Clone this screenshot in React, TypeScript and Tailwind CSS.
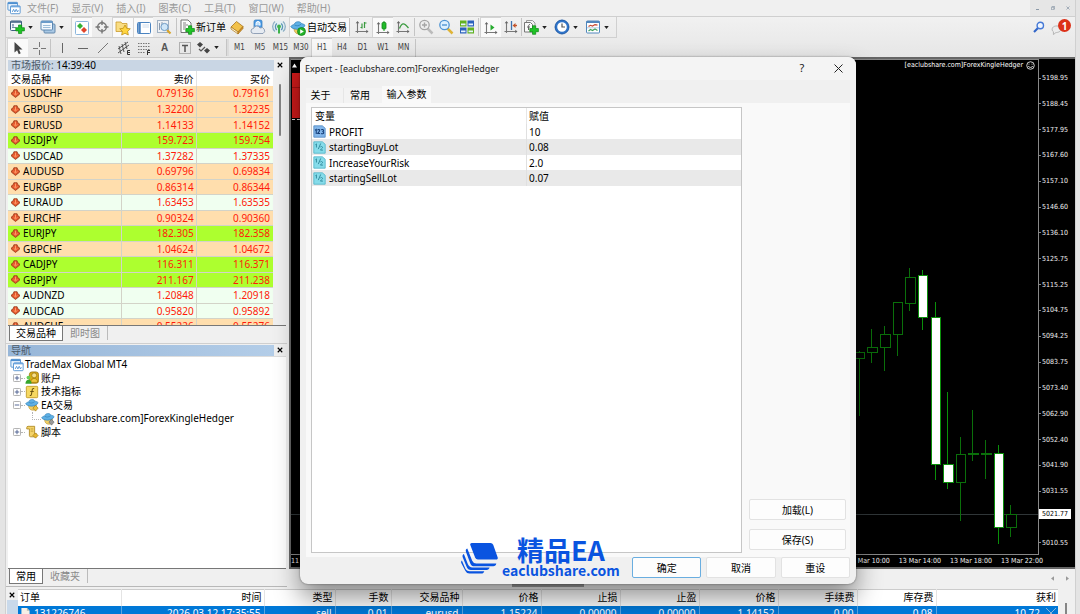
import type { ReactNode } from "react";

const CHART_FONT = "font-['DejaVu_Sans_Condensed','Noto_Sans',sans-serif]";

/* ---------- icons ---------- */

function Icon({ children, className = "size-4" }: { children: ReactNode; className?: string }) {
  return (
    <svg viewBox="0 0 16 16" fill="none" aria-hidden="true" className={`shrink-0 ${className}`}>
      {children}
    </svg>
  );
}

const Plus = ({ x = 0, y = 0 }: { x?: number; y?: number }) => (
  <path
    transform={`translate(${x} ${y})`}
    d="M3 .5h3.200v2.700h2.700v3.200H6.200V9H3V6.400H.3V3.200H3z"
    fill="#1fc426"
    stroke="#0b8a12"
    strokeWidth=".7"
  />
);

const AppLogo = ({ className }: { className?: string }) => (
  <Icon className={className}>
    <rect x="1" y="1.500" width="11" height="9" rx="1" fill="#e8f2fb" stroke="#4d8fd0" />
    <path d="M1 2.500h11" stroke="#4d8fd0" strokeWidth="2" />
    <rect x="4" y="5.500" width="11" height="9" rx="1" fill="#fff" stroke="#4d8fd0" />
    <path d="M4 6.500h11" stroke="#6aa5dd" strokeWidth="1.500" />
    <path d="M6 12.500l1.500-3 1.500 3 1.500-3 1.500 3 1-2" stroke="#4d8fd0" />
  </Icon>
);

const NewChart = () => (
  <Icon>
    <rect x="1.500" y="2" width="11" height="9.500" rx="1" fill="#f4f8fc" stroke="#3d5f80" />
    <path d="M1.500 3h11" stroke="#3d5f80" strokeWidth="1.500" />
    <path d="M4 5v4M3 6h2M3 8.500h4" stroke="#6e8aa6" />
    <Plus x={6.500} y={5.500} />
  </Icon>
);

const Profiles = () => (
  <Icon>
    <rect x="4" y="5" width="11" height="9" rx="1" fill="#a9c8e4" stroke="#6489ac" />
    <rect x="1" y="2" width="11.500" height="9" rx="1" fill="#f3f8fd" stroke="#5d87b0" />
    <path d="M1 3h11.500" stroke="#6b9bc9" strokeWidth="2" />
    <path d="M3 6.500h7.500M3 8.500h7.500" stroke="#9dbdd9" />
  </Icon>
);

const MarketWatchIcon = () => (
  <Icon>
    <rect x="1.500" y="1.500" width="13" height="13" rx="1" fill="#fff" stroke="#8ab6dd" />
    <path d="M6 3l3 3-3 3-3-3z" fill="#35b135" />
    <path d="M10 7l3 3-3 3-3-3z" fill="#e0452a" />
  </Icon>
);

const Crosshair = () => (
  <Icon>
    <circle cx="8" cy="8" r="4.300" stroke="#777" strokeWidth="1.400" />
    <path d="M8 1.500v4.500M8 10v4.500M1.500 8h4.500M10 8h4.500" stroke="#777" strokeWidth="1.400" />
  </Icon>
);

const FolderStar = () => (
  <Icon>
    <path d="M1 3.500V2h5l1 1.500h5v8H1z" fill="#f9dd83" stroke="#c99a2c" strokeWidth=".8" />
    <path d="M10 5l1.700 3.300 3.600.5-2.600 2.500.6 3.700-3.300-1.700L6.700 15l.6-3.700-2.600-2.500 3.600-.5z" fill="#ffd53f" stroke="#b8860b" strokeWidth=".7" />
  </Icon>
);

const TerminalIcon = () => (
  <Icon>
    <rect x="1.500" y="2.500" width="13" height="11" rx="1" fill="#fff" stroke="#4a83c0" />
    <path d="M3.500 2.500v11" stroke="#4a83c0" strokeWidth="2.500" />
    <path d="M6.500 5h6.500M6.500 7h6.500" stroke="#b8cce2" strokeWidth=".7" />
  </Icon>
);

const TesterIcon = () => (
  <Icon>
    <rect x="1.500" y="1.500" width="11" height="12" fill="#eef1f4" stroke="#9fb0c2" />
    <path d="M3.500 4v7M6 3v4" stroke="#8a9bb0" />
    <path d="M11 11l3.500 3.500" stroke="#d9a52c" strokeWidth="2.200" />
    <circle cx="8.500" cy="8" r="3.600" fill="#cfe6f8" stroke="#6f9cc6" />
  </Icon>
);

const NewOrderIcon = () => (
  <Icon>
    <path d="M2 1h7l3 3v9.500H2z" fill="#fdfdfd" stroke="#666" strokeWidth=".9" />
    <path d="M4 4h3M4 6h5M4 8h3M4 10h2" stroke="#777" strokeWidth=".9" />
    <Plus x={6.500} y={6.300} />
  </Icon>
);

const MetaEditor = () => (
  <Icon>
    <path d="M2 8L7.500 2.500 14 7.500 9 13z" fill="#f2c14a" stroke="#a8741a" strokeWidth=".8" />
    <path d="M2 8v2l7 5v-2z" fill="#fff3cf" stroke="#a8741a" strokeWidth=".7" />
    <path d="M9 13v2l5-5.500v-2z" fill="#d6932a" stroke="#a8741a" strokeWidth=".7" />
  </Icon>
);

const CloudUser = () => (
  <Icon>
    <rect x="4" y="1" width="8" height="8.500" rx="1.500" fill="#4b9be6" stroke="#2f75b8" strokeWidth=".7" />
    <path d="M6 6.500V4.500a2 2 0 014 0v2" fill="#bfe0fb" stroke="#fff" />
    <path d="M3.500 14.500a2.500 2.500 0 010-5 3.500 3.500 0 016.500-.5 2.800 2.800 0 013 5.500z" fill="#e6ebf2" stroke="#7c8fa9" strokeWidth=".8" />
  </Icon>
);

const Signal = () => (
  <Icon>
    <circle cx="8" cy="7.500" r="6.300" fill="#e4eef2" />
    <path d="M4 12.500a6.500 6.500 0 010-10M12 2.500a6.500 6.500 0 010 10" stroke="#8fb0c4" strokeWidth="1.300" />
    <path d="M5.800 11a4.500 4.500 0 010-6.500M10.200 4.500a4.500 4.500 0 010 6.500" stroke="#5b96b5" strokeWidth="1.300" />
    <circle cx="8" cy="7.500" r="1.900" fill="#3fb24a" />
    <path d="M8 8v6.500" stroke="#3fb24a" strokeWidth="2" />
  </Icon>
);

const Expert = ({ badge, className }: { badge: ReactNode; className?: string }) => (
  <Icon className={className}>
    <path d="M4 8c0 4 2 6 5 6s4-3 4-6z" fill="#f0cd63" stroke="#b18b2b" strokeWidth=".6" />
    <path d="M.8 6.500C2 4.500 4 5 4.500 4 5 1.500 9.500.8 11 3c.6 1 3 .8 4 2.300-1 3-5 4.200-8 4C4 9 1.500 8.300.8 6.500z" fill="#5fb0e4" stroke="#2d7db5" strokeWidth=".7" />
    <path d="M4.500 5c2 1.200 4.500 1 6.500-.8" stroke="#2d7db5" strokeWidth=".7" />
    {badge}
  </Icon>
);

const PlayBadge = () => (
  <>
    <circle cx="11.500" cy="11.500" r="4" fill="#24b42a" stroke="#0d7e14" strokeWidth=".7" />
    <path d="M10.200 9.300v4.400l3.600-2.200z" fill="#fff" />
  </>
);

const Axes = () => (
  <>
    <path d="M3.500 3v11M1.500 12.500h12" stroke="#777" strokeWidth="1.100" />
    <path d="M1.700 4.200L3.500 2l1.800 2.200zM12.300 10.700l2.200 1.800-2.200 1.800z" fill="#666" />
  </>
);

const BarChart = () => (
  <Icon>
    <Axes />
    <path d="M8 9.500V4.500M8 8.500H6.500M10.500 3v6M10.500 4h2" stroke="#3a9b3f" strokeWidth="1.200" />
  </Icon>
);
const CandleChart = () => (
  <Icon>
    <Axes />
    <path d="M9 1v10" stroke="#159b1c" />
    <rect x="7" y="2.500" width="4" height="6.500" rx="1" fill="#20bb29" stroke="#128419" strokeWidth=".8" />
  </Icon>
);
const LineChart = () => (
  <Icon>
    <Axes />
    <path d="M4.500 9.500C7 3.500 9 3.500 13.500 9" stroke="#3a9b3f" strokeWidth="1.300" />
  </Icon>
);

const Magnifier = ({ ring, glass, handle, plus }: { ring: string; glass: string; handle: string; plus?: boolean }) => (
  <Icon>
    <path d="M9.500 9.500l5 5" stroke={handle} strokeWidth="2.500" />
    <circle cx="6.500" cy="6" r="4.700" fill={glass} stroke={ring} strokeWidth="1.300" />
    <path d={plus ? "M4 6h5M6.500 3.500v5" : "M4 6h5"} stroke={ring} strokeWidth="1.400" />
  </Icon>
);

const TileWindows = () => (
  <Icon>
    <rect x="1" y="1.500" width="6.500" height="6" fill="#62b222" />
    <rect x="8.500" y="1.500" width="6.500" height="6" fill="#2c62bd" />
    <rect x="1" y="8.500" width="6.500" height="6" fill="#2c62bd" />
    <rect x="8.500" y="8.500" width="6.500" height="6" fill="#62b222" />
    <path d="M2 5.300h4.500M9.500 5.300H14M2 12.300h4.500M9.500 12.300H14" stroke="#e8f4ff" strokeWidth="1.800" />
  </Icon>
);

const AutoScroll = () => (
  <Icon>
    <Axes />
    <path d="M7.500 4.500v6l4-3z" fill="#27ab2e" />
  </Icon>
);
const ChartShift = () => (
  <Icon>
    <Axes />
    <path d="M8.500 2v9" stroke="#3e72ad" strokeWidth="1.300" />
    <path d="M14 6.500h-3" stroke="#c3542b" strokeWidth="1.400" />
    <path d="M9.500 6.500l3-2.500v5z" fill="#c3542b" />
  </Icon>
);
const Indicators = () => (
  <Icon>
    <path d="M3.500 1.500h6l2.500 2.500v8H3.500z" fill="#f2f2f2" stroke="#999" />
    <path d="M1.500 3.500h6l2 2v7.500h-8z" fill="#fafafa" stroke="#777" />
    <path d="M7 5.500c-1.500 0-1.500 1-1.500 2V11M4 8h3" stroke="#666" />
    <Plus x={6.500} y={6.300} />
  </Icon>
);
const Clock = () => (
  <Icon>
    <circle cx="8" cy="8" r="6" fill="#fff" stroke="#2f74c9" strokeWidth="2.400" />
    <circle cx="8" cy="8" r="7" stroke="#1d519a" strokeWidth=".7" />
    <path d="M8 4.500V8h3" stroke="#555" strokeWidth="1.200" />
  </Icon>
);
const Templates = () => (
  <Icon>
    <rect x="1.500" y="2" width="13" height="12" rx="1" fill="#fff" stroke="#5187bd" />
    <path d="M1.500 3h13" stroke="#5187bd" strokeWidth="2" />
    <path d="M3.500 7.500l2-1.200 2 .8 2.500-1.500 2.500.5" stroke="#c4462f" strokeWidth="1.200" />
    <path d="M2 8.800h12" stroke="#9bb9d6" strokeWidth=".7" />
    <path d="M3.500 12l2-1.500 2 1 2.500-1.500 2.500 1.500" stroke="#3fa15c" strokeWidth="1.200" />
  </Icon>
);

const Cursor = () => (
  <Icon>
    <path d="M4.500 2v10.500l2.600-2.300 1.700 4 1.900-.9-1.700-3.800h3.500z" fill="#444" />
  </Icon>
);
const CrossCursor = () => (
  <Icon>
    <path d="M8.500 2v5M8.500 10v5M2 8.500h5M10 8.500h5" stroke="#777" />
  </Icon>
);
const VLine = () => (
  <Icon>
    <path d="M8.500 3v10" stroke="#666" />
  </Icon>
);
const HLine = () => (
  <Icon>
    <path d="M3 8.500h10" stroke="#666" />
  </Icon>
);
const TrendLine = () => (
  <Icon>
    <path d="M3 13L13 3" stroke="#777" />
  </Icon>
);
const Channel = () => (
  <Icon>
    <path d="M2 9l10-7M2 13l11-8M3 6l2 8M6 4l2 8M9 2l2 7" stroke="#555" />
    <path d="M14 10.500h-2.500v4H14M11.500 12.500H14" stroke="#333" />
  </Icon>
);
const Fibo = () => (
  <Icon>
    <path d="M2 3.500h12M2 6.500h12M2 9.500h12M2 12.500h7" stroke="#777" strokeDasharray="1.500 1" />
    <path d="M11.500 15v-4.500H14M11.500 12.500H14" stroke="#333" />
  </Icon>
);
const Letter = () => (
  <span className="font-['Liberation_Sans',sans-serif] text-[10px] font-bold leading-4 text-[#555]">A</span>
);
const TextLabel = () => (
  <Icon>
    <rect x="2.500" y="2.500" width="11" height="11" stroke="#777" strokeDasharray="1 1" />
    <path d="M5 5.500h6M8 5.500V12" stroke="#555" strokeWidth="1.500" />
  </Icon>
);
const Arrows = () => (
  <Icon>
    <path d="M2 4.500L5 2l3 2.500L5 7.500z" fill="#444" />
    <path d="M4 9l2 2 4-4" stroke="#555" strokeWidth="1.200" />
    <path d="M9 10.500L12 8l3 2.500-3 3z" fill="#444" />
  </Icon>
);

const DownArrow = () => (
  <svg viewBox="0 0 10 10" aria-hidden="true" className="size-[9px] shrink-0">
    <path d="M3.200.8h3.600l.8 2.300 1.900 1.200v1.500L5 9.400.5 5.800V4.300l1.900-1.200z" fill="#e2552b" stroke="#8f3413" strokeWidth=".8" />
    <path d="M5 1.800v4.500M3 4.800l2 2 2-2" stroke="#ff9a66" strokeWidth="1.100" fill="none" />
  </svg>
);

const Accounts = () => (
  <Icon className="size-[14px]">
    <rect x="5" y="1" width="10.500" height="13" rx="3" fill="#d9a915" stroke="#8f6c06" strokeWidth=".8" />
    <circle cx="10.500" cy="5" r="2.800" fill="#f6df8c" stroke="#8f6c06" strokeWidth=".7" />
    <path d="M6.500 13c0-6 8-6 8 0z" fill="#f0c63c" stroke="#8f6c06" strokeWidth=".7" />
    <circle cx="4" cy="7.500" r="2.200" fill="#67cf55" />
    <path d="M.5 14.500c0-6 7-6 7 0z" fill="#35a52c" />
  </Icon>
);
const FunctionIcon = () => (
  <Icon className="size-[14px]">
    <rect x="1.500" y="1.500" width="13" height="13" rx="1" fill="#f6d861" stroke="#c19a24" />
    <path d="M10.500 4c-2-.5-2.200 1-2.500 3l-.5 3c-.3 1.700-.8 2.300-2 2M6 7.500h4" stroke="#6b5310" strokeWidth="1.200" />
  </Icon>
);
const ScriptIcon = () => (
  <Icon className="size-[14px]">
    <path d="M2 3a1.500 1.500 0 011.500-1.500H11V10h2v3.500H6.500A1.500 1.500 0 015 12V4.500H2z" fill="#f3d36a" stroke="#b08a25" />
    <path d="M6.500 4.500h3M6.500 7h3" stroke="#b08a25" strokeWidth=".8" />
    <path d="M12 9l3 3-3 3-3-3z" fill="#e8b830" stroke="#9a7414" strokeWidth=".7" />
  </Icon>
);

const IntParam = () => (
  <Icon className="size-[13px]">
    <path d="M1 1h10.500L15 4v11H1z" fill="#82b6ea" stroke="#5189c2" />
    <path d="M2.500 6.500L4 5.500V11M5.500 6.500c1-1.500 3-.8 2.700.5C8 8.200 6 9.500 5.700 10.500h3M10 6c1-1 3-.6 3 .8 0 .9-.8 1.200-1.500 1.200 1 0 1.700.5 1.700 1.400 0 1.500-2.200 1.700-3.200.8" stroke="#153f78" strokeWidth="1.300" />
  </Icon>
);
const DoubleParam = () => (
  <Icon className="size-[13px]">
    <path d="M1 1h10.500L15 4v11H1z" fill="#86dcea" stroke="#50b4c8" />
    <path d="M3 4.500l1.200-1V8M9.500 3L6.500 10M9 7.500c1-1.300 3-.7 2.700.6C11.500 9 9.500 10 9.200 11.200h3" stroke="#2b8498" strokeWidth="1.100" />
  </Icon>
);

const CloseGlyph = ({ className = "size-[6px]" }: { className?: string }) => (
  <svg viewBox="0 0 8 8" aria-hidden="true" className={className}>
    <path d="M1 1l6 6M7 1L1 7" stroke="currentColor" strokeWidth="1.500" />
  </svg>
);

const Caret = () => (
  <svg viewBox="0 0 6 4" aria-hidden="true" className="h-[3px] w-[5px] shrink-0">
    <path d="M0 0h6L3 4z" fill="#222" />
  </svg>
);

/* ---------- toolbars ---------- */

function Tool({
  label,
  children,
  narrow,
  active,
}: {
  label: string;
  children: ReactNode;
  narrow?: boolean;
  active?: boolean;
}) {
  return (
    <button
      type="button"
      aria-label={label}
      className={`flex h-full shrink-0 items-center justify-center ${narrow ? "w-5" : "w-[21px]"} ${
        active ? "border-l border-t border-[#d4d4d4] bg-[#fafafa]" : ""
      }`}
    >
      {children}
    </button>
  );
}

const DropTool = ({ label, children }: { label: string; children: ReactNode }) => (
  <button type="button" aria-label={label} className="flex h-full w-[31px] shrink-0 items-center gap-[3px]">
    {children}
    <Caret />
  </button>
);

const Sep = ({ className = "mx-px" }: { className?: string }) => (
  <span className={`h-[18px] w-px shrink-0 bg-[#c4c4c4] ${className}`} />
);

const menus = ["文件(F)", "显示(V)", "插入(I)", "图表(C)", "工具(T)", "窗口(W)", "帮助(H)"];
const frames = ["M1", "M5", "M15", "M30", "H1", "H4", "D1", "W1", "MN"];

function MenuBar() {
  return (
    <header className="flex h-[17px] shrink-0 items-center border-b border-[#cfcfcf] pl-px">
      <AppLogo className="size-[14px]" />
      <nav className="flex gap-[13px] pl-[6px] text-[10px] leading-4 text-[#999]">
        {menus.map((m) => (
          <button type="button" key={m}>
            {m}
          </button>
        ))}
      </nav>
      <div className="ml-auto flex h-full items-center bg-[#e6e6e6] text-[#8c9aa8]">
        <button type="button" aria-label="最小化" className="flex w-[15px] justify-center">
          <span className="mt-0.5 h-px w-[3px] bg-[#8c9aa8]" />
        </button>
        <button type="button" aria-label="还原" className="flex w-[15px] justify-center">
          <svg viewBox="0 0 8 8" aria-hidden="true" className="size-1">
            <path d="M2.500 2V.8h5v5H6M.8 2.500h5v5h-5z" fill="none" stroke="currentColor" strokeWidth="1.500" />
          </svg>
        </button>
        <button type="button" aria-label="关闭" className="flex w-[15px] justify-center">
          <CloseGlyph className="size-1" />
        </button>
      </div>
    </header>
  );
}

function Toolbars() {
  return (
    <div className="flex h-10 shrink-0 justify-between bg-linear-to-b from-[#f1f1f1] to-[#e6e6e6]">
      <div>
        <div className="flex h-[21px] items-center border-b border-r border-[#d0d0d0] pl-[3px]">
          <DropTool label="新图表"><NewChart /></DropTool>
          <DropTool label="配置文件"><Profiles /></DropTool>
          <Tool label="市场报价" active><MarketWatchIcon /></Tool>
          <Tool label="数据窗口" narrow><Crosshair /></Tool>
          <Tool label="导航" active><FolderStar /></Tool>
          <Tool label="终端" narrow active><TerminalIcon /></Tool>
          <Tool label="策略测试"><TesterIcon /></Tool>
          <Sep className="mx-0.5" />
          <button type="button" className="flex h-full w-[48px] shrink-0 items-center gap-px whitespace-nowrap text-[10px] text-black">
            <NewOrderIcon />
            新订单
          </button>
          <Tool label="编辑器" narrow><MetaEditor /></Tool>
          <Tool label="社区"><CloudUser /></Tool>
          <Tool label="信号"><Signal /></Tool>
          <button type="button" className="flex h-full w-[60px] shrink-0 items-center gap-px whitespace-nowrap border-l border-t border-[#d4d4d4] bg-[#fafafa] text-[10px] text-black">
            <Expert badge={<PlayBadge />} />
            自动交易
          </button>
          <Sep className="mr-0.5" />
          <Tool label="柱状图" narrow><BarChart /></Tool>
          <Tool label="蜡烛图" active><CandleChart /></Tool>
          <Tool label="折线图" narrow><LineChart /></Tool>
          <Sep />
          <Tool label="放大" narrow><Magnifier ring="#a5a5a5" glass="#eee" handle="#bbb" plus /></Tool>
          <Tool label="缩小" narrow><Magnifier ring="#4f94d3" glass="#dcf0ff" handle="#dfb437" /></Tool>
          <Tool label="平铺"><TileWindows /></Tool>
          <Sep />
          <Tool label="自动滚动" active><AutoScroll /></Tool>
          <Tool label="图表平移" narrow><ChartShift /></Tool>
          <Sep className="mr-px" />
          <DropTool label="指标"><Indicators /></DropTool>
          <DropTool label="周期"><Clock /></DropTool>
          <DropTool label="模板"><Templates /></DropTool>
        </div>
        <div className="flex h-[19px] items-center pl-px">
          <Tool label="光标" active><Cursor /></Tool>
          <Tool label="十字线"><CrossCursor /></Tool>
          <Sep />
          <Tool label="垂直线" narrow><VLine /></Tool>
          <Tool label="水平线"><HLine /></Tool>
          <Tool label="趋势线" narrow><TrendLine /></Tool>
          <Tool label="等距通道"><Channel /></Tool>
          <Tool label="斐波那契" narrow><Fibo /></Tool>
          <Tool label="文本"><Letter /></Tool>
          <Tool label="文本标签" narrow><TextLabel /></Tool>
          <DropTool label="箭头"><Arrows /></DropTool>
          <span className="h-[17px] w-[3px] shrink-0 border-l border-[#c4c4c4] bg-[#dcdcdc]" />
          {frames.map((f, i) => (
            <button
              type="button"
              key={f}
              className={`h-full shrink-0 text-center font-['DejaVu_Sans_Condensed',sans-serif] text-[8px] text-[#444] ${
                i % 2 ? "w-5" : "w-[21px]"
              } ${f === "H1" ? "border-l border-t border-[#d0d0d0] bg-[#f7f7f7]" : ""}`}
            >
              {f}
            </button>
          ))}
          <Sep />
        </div>
      </div>
      <div className="flex h-5 items-center gap-1 pr-1">
        <button type="button" aria-label="搜索">
          <svg viewBox="0 0 12 12" fill="none" aria-hidden="true" className="size-3">
            <path d="M1 11l4-4" stroke="#3165c8" strokeWidth="2.200" />
            <circle cx="7.300" cy="4.500" r="3.200" fill="#eef5ff" stroke="#4679d6" strokeWidth="1.400" />
          </svg>
        </button>
        <button type="button" aria-label="通知" className="relative h-4 w-[22px]">
          <svg viewBox="0 0 16 16" aria-hidden="true" className="absolute bottom-0 left-0.5 size-[13px]">
            <path d="M2 7c2-3 9-3 10 1s-4 5-6 5l-3 2.500V12C1 11 1 8.500 2 7z" fill="#ececec" stroke="#aaa" />
          </svg>
          <span className="absolute right-0 top-0 flex size-[13px] items-center justify-center rounded-full bg-[#dc3018] text-[10px] font-bold leading-none text-white">
            1
          </span>
        </button>
      </div>
    </div>
  );
}

/* ---------- left side ---------- */

const quotes: [string, string, string, "o" | "g" | "m"][] = [
  ["USDCHF", "0.79136", "0.79161", "o"],
  ["GBPUSD", "1.32200", "1.32235", "o"],
  ["EURUSD", "1.14133", "1.14152", "o"],
  ["USDJPY", "159.723", "159.754", "g"],
  ["USDCAD", "1.37282", "1.37335", "m"],
  ["AUDUSD", "0.69796", "0.69834", "o"],
  ["EURGBP", "0.86314", "0.86344", "o"],
  ["EURAUD", "1.63453", "1.63535", "m"],
  ["EURCHF", "0.90324", "0.90360", "o"],
  ["EURJPY", "182.305", "182.358", "g"],
  ["GBPCHF", "1.04624", "1.04672", "o"],
  ["CADJPY", "116.311", "116.371", "g"],
  ["GBPJPY", "211.167", "211.238", "g"],
  ["AUDNZD", "1.20848", "1.20918", "m"],
  ["AUDCAD", "0.95820", "0.95892", "m"],
  ["AUDCHF", "0.55226", "0.55276", "o"],
];
const rowColor = { o: "bg-[#ffdead]", g: "bg-[#adff2f]", m: "bg-[#f0fff0]" };

function PanelTitle({ children, tone }: { children: ReactNode; tone: string }) {
  return (
    <div className="flex h-3 shrink-0 items-center">
      <h2 className={`h-[11px] flex-1 overflow-hidden pl-[3px] text-[10px] leading-[10px] text-[#4c5a68] ${tone}`}>{children}</h2>
      <button type="button" aria-label="关闭" className="flex w-3 justify-center text-black">
        <CloseGlyph />
      </button>
    </div>
  );
}

function PanelTabs({ tabs }: { tabs: [string, string] }) {
  return (
    <div role="tablist" className="flex h-[18px] shrink-0 items-start border-t border-[#777] text-[10px] leading-[14px]">
      <button type="button" role="tab" aria-selected="true" className="ml-px border border-t-0 border-[#777] bg-white px-[6px] text-black">
        {tabs[0]}
      </button>
      <button type="button" role="tab" aria-selected="false" className="h-[14px] border-r border-[#bbb] px-[7px] text-[#8a8a8a]">
        {tabs[1]}
      </button>
    </div>
  );
}

function MarketWatch() {
  return (
    <section className="flex min-h-0 flex-[286] flex-col border-b border-[#cfcfcf] pl-0.5 pr-px pt-px">
      <PanelTitle tone="bg-[#c9d6e4]">
        市场报价: <span className="text-black">14:39:40</span>
      </PanelTitle>
      <div className="flex min-h-0 flex-1 overflow-hidden">
        <table className="h-min flex-1 table-fixed border-collapse text-[10px] leading-[14px]">
          <colgroup>
            <col className="w-[43%]" />
            <col className="w-[28%]" />
            <col className="w-[29%]" />
          </colgroup>
          <thead>
            <tr className="h-[15px] bg-white text-black">
              <th className="border-r border-[#e2e2e2] p-0 pl-[3px] text-left font-normal">交易品种</th>
              <th className="border-r border-[#e2e2e2] p-0 pr-0.5 text-right font-normal">卖价</th>
              <th className="p-0 pr-[3px] text-right font-normal">买价</th>
            </tr>
          </thead>
          <tbody>
            {quotes.map(([name, bid, ask, c]) => (
              <tr key={name} className={`h-[15px] even:h-4 ${rowColor[c]}`}>
                <td className="border-b border-r border-[#d3d3c8] p-0 pl-[3px] text-black">
                  <span className="flex items-center gap-[3px]">
                    <DownArrow />
                    {name}
                  </span>
                </td>
                <td className="border-b border-r border-[#d3d3c8] p-0 pr-0.5 text-right text-[#ff1a0a]">{bid}</td>
                <td className="border-b border-[#d3d3c8] p-0 pr-[3px] text-right text-[#ff1a0a]">{ask}</td>
              </tr>
            ))}
          </tbody>
        </table>
        <div className="w-[13px] shrink-0 pl-1.5 pt-[13px]">
          <div className="h-[52px] w-0.5 rounded bg-[#858585]" />
        </div>
      </div>
      <PanelTabs tabs={["交易品种", "即时图"]} />
    </section>
  );
}

const Toggle = ({ open }: { open?: boolean }) => (
  <svg viewBox="0 0 9 9" fill="none" aria-hidden="true" className="size-2 shrink-0">
    <rect x=".5" y=".5" width="8" height="8" rx="1" fill="#fff" stroke="#a5a5a5" />
    <path d={open ? "M2 4.500h5" : "M2 4.500h5M4.500 2v5"} stroke="#44598c" />
  </svg>
);

function Navigator() {
  const gear = <path d="M12 8.500l3 3-3 3.500-3-3.500z" fill="#ecc23e" stroke="#9a7414" strokeWidth=".7" />;
  const grayGear = <path d="M12 8.500l3 3-3 3.500-3-3.500z" fill="#999" stroke="#666" strokeWidth=".7" />;
  const items: { label: string; icon: ReactNode; open?: boolean; child?: boolean }[] = [
    { label: "账户", icon: <Accounts /> },
    { label: "技术指标", icon: <FunctionIcon /> },
    { label: "EA交易", icon: <Expert badge={gear} className="size-[14px]" />, open: true },
    {
      label: "[eaclubshare.com]ForexKingleHedger",
      icon: <Expert badge={grayGear} className="size-[14px]" />,
      child: true,
    },
    { label: "脚本", icon: <ScriptIcon /> },
  ];
  return (
    <section className="flex min-h-0 flex-[243] flex-col border-b border-[#b8b8b8] pl-0.5 pr-px">
      <PanelTitle tone="bg-linear-to-r from-[#97b6d8] to-[#b3cde8]">导航</PanelTitle>
      <ul className="min-h-0 flex-1 overflow-hidden border-t border-[#ddd] bg-white pt-px text-[10px] leading-[13px] text-black">
        <li className="flex h-[13px] items-center gap-px pl-0.5">
          <AppLogo className="size-[14px]" />
          TradeMax Global MT4
        </li>
        {items.map((it) => (
          <li key={it.label} className={`flex h-[13px] items-center even:h-[14px] ${it.child ? "pl-6" : "pl-[5px]"}`}>
            {it.child ? (
              <span className="mb-1.5 h-2 w-[9px] border-b border-l border-dotted border-[#b5b5b5]" />
            ) : (
              <>
                <Toggle open={it.open} />
                <span className="w-1 border-t border-dotted border-[#b5b5b5]" />
              </>
            )}
            {it.icon}
            <span className="pl-0.5">{it.label}</span>
          </li>
        ))}
      </ul>
      <PanelTabs tabs={["常用", "收藏夹"]} />
    </section>
  );
}

/* ---------- chart ---------- */

const prices = [
  "5198.95", "5188.45", "5177.95", "5167.60", "5157.10", "5146.60", "5136.10", "5125.75", "5115.25", "5104.75",
  "5094.25", "5083.75", "5073.40", "5062.90", "5052.40", "5041.90", "5031.55", "", "5010.55",
];

/* left, width, top, height, wick top, wick bottom, filled */
const candles: [number, number, number, number, number, number, boolean][] = [
  [855, 9, 352, 6, 351, 416, false],
  [867, 10, 347, 5, 329, 363, false],
  [880, 10, 334, 13, 326, 371, false],
  [893, 9, 302, 32, 302, 356, false],
  [905, 10, 277, 26, 268, 311, false],
  [918, 9, 275, 42, 270, 330, true],
  [931, 9, 317, 147, 302, 480, true],
  [943, 10, 464, 18, 392, 489, true],
  [956, 9, 454, 28, 437, 521, false],
  [968, 10, 453, 1, 410, 461, false],
  [981, 10, 453, 1, 440, 479, false],
  [994, 9, 453, 74, 445, 544, true],
  [1006, 10, 514, 13, 505, 537, false],
];

function Chart() {
  return (
    <section className="flex min-h-0 min-w-0 flex-1 flex-col">
      <div className={`relative flex h-[512px] min-h-0 flex-col border-2 border-r-0 border-[#666] bg-black text-[#f0f0f0] ${CHART_FONT}`}>
        <div className="flex min-h-0 flex-1">
          <div className="relative flex min-w-0 flex-1 justify-end overflow-hidden border-b border-r border-t border-[#888]">
            <svg viewBox="291 60 747 495" aria-hidden="true" className="h-[495px] w-[747px] shrink-0">
              <path d="M292 67.500l2.500-4 2.500 4z" fill="#fff" />
              <rect x="292" y="73" width="20" height="45" fill="#cf1a1a" />
              <path d="M292 87.500h20" stroke="#a01010" />
              <path d="M292 119.500h20" stroke="#ddd" strokeDasharray="3 2" />
              <path d="M290 514.500h750" stroke="#303638" />
              {candles.map(([x, w, y, h, t, b, filled]) => (
                <g key={x} stroke={filled ? "#0a8f0a" : "#0a6f0a"}>
                  <path d={`M${x + 5 - 0.5} ${t}V${b}`} />
                  <rect x={x + 0.5} y={y + 0.5} width={w} height={h} fill={filled ? "#fff" : "#000"} />
                </g>
              ))}
            </svg>
            <p className="absolute right-[3px] top-px flex items-center gap-[3px] text-[7px] leading-[9px] text-white">
              [eaclubshare.com]ForexKingleHedger
              <svg viewBox="0 0 10 10" fill="none" aria-hidden="true" className="size-[9px]">
                <circle cx="5" cy="5" r="4.200" stroke="#fff" strokeWidth=".9" />
                <path d="M2.500 5.500c.7 2.200 4.300 2.200 5 0M3.300 3v1M6.700 3v1" stroke="#fff" strokeWidth=".9" />
              </svg>
            </p>
          </div>
          <ul className="flex w-9 flex-col justify-between pb-[7px] pt-[14px] text-[7px] leading-[10px]">
            {prices.map((p, i) => (
              <li key={i} className="flex h-[10px] items-center gap-px">
                {p && <span className="h-px w-0.5 bg-[#888]" />}
                {p}
              </li>
            ))}
          </ul>
          <span className="absolute right-1 top-[450px] bg-white px-[3px] text-[7px] leading-[10px] text-black">5021.77</span>
        </div>
        <div className="flex h-3 items-center overflow-hidden whitespace-nowrap text-[7px] leading-3">
          <span>11</span>
          <div className="ml-auto flex gap-[9px] pr-8">
            <span>13 Mar 10:00</span>
            <span>13 Mar 14:00</span>
            <span>13 Mar 18:00</span>
            <span>13 Mar 22:00</span>
          </div>
        </div>
      </div>
      <div className="flex flex-1 items-center justify-end gap-3 pr-1.5">
        <span className="ml-[223px] mr-auto h-1 w-[72px] self-end bg-[#999]" />
        <svg viewBox="0 0 4 6" aria-label="向左" className="h-[5px] w-[3px]">
          <path d="M4 0v6L0 3z" fill="#999" />
        </svg>
        <svg viewBox="0 0 4 6" aria-label="向右" className="h-[5px] w-[3px]">
          <path d="M0 0v6l4-3z" fill="#999" />
        </svg>
      </div>
    </section>
  );
}

/* ---------- terminal ---------- */

const orderColumns: [string, string, string][] = [
  ["订单", "131226746", "w-[103px]"],
  ["时间", "2026.03.12 17:35:55", "w-[143px]"],
  ["类型", "sell", "w-[71px]"],
  ["手数", "0.01", "w-[56px]"],
  ["交易品种", "eurusd", "w-[71px]"],
  ["价格", "1.15224", "w-[79px]"],
  ["止损", "0.00000", "w-[79px]"],
  ["止盈", "0.00000", "w-[79px]"],
  ["价格", "1.14152", "w-[79px]"],
  ["手续费", "0.00", "w-[79px]"],
  ["库存费", "0.08", "w-[79px]"],
  ["获利", "10.72", ""],
];

function Terminal() {
  return (
    <section className="flex h-[27px] shrink-0 overflow-hidden pt-0.5">
      <div className="flex w-3 shrink-0 flex-col">
        <button type="button" aria-label="关闭" className="flex h-[11px] items-center justify-center text-black">
          <CloseGlyph />
        </button>
        <span className="ml-px flex-1 bg-[#c9d9ea]" />
      </div>
      <div className="min-w-0 flex-1">
        <table className="w-full table-fixed border-collapse text-[10px] leading-[15px]">
          <colgroup>
            {orderColumns.map(([, , w], i) => (
              <col key={i} className={w} />
            ))}
          </colgroup>
          <thead>
            <tr className="h-4 border-t border-[#ccc] bg-white text-black">
              {orderColumns.map(([h], i) => (
                <th key={i} className="border-r border-[#e4e4e4] p-0 px-0.5 text-right font-normal first:text-left last:border-r-0">
                  {h}
                </th>
              ))}
            </tr>
          </thead>
          <tbody>
            <tr className="h-[15px] bg-[#0078d7] text-white">
              {orderColumns.map(([, v], i) => (
                <td key={i} className="border-r border-[#5aa5e2] p-0 px-[3px] text-right last:border-r-0 last:pr-0.5">
                  {i === 0 ? (
                    <span className="flex items-center gap-1">
                      <svg viewBox="0 0 9 11" aria-hidden="true" className="h-[10px] w-[9px]">
                        <path d="M0 0h6l3 3v8H0z" fill="#f5efe6" />
                        <path d="M6 0v3h3" fill="#bba" />
                      </svg>
                      {v}
                    </span>
                  ) : i === orderColumns.length - 1 ? (
                    <span className="flex items-center justify-end gap-1.5">
                      {v}
                      <svg viewBox="0 0 10 10" aria-hidden="true" className="size-[10px]">
                        <path d="M0 0l10 10M10 0L0 10" stroke="#8fb6d9" strokeWidth="1" />
                      </svg>
                    </span>
                  ) : (
                    v
                  )}
                </td>
              ))}
            </tr>
          </tbody>
        </table>
      </div>
      <div className="w-[17px] shrink-0 pl-[7px] pt-[14px]">
        <div className="h-3 w-0.5 bg-[#858585]" />
      </div>
    </section>
  );
}

/* ---------- dialog ---------- */

const params: [string, string, ReactNode][] = [
  ["PROFIT", "10", <IntParam key="i" />],
  ["startingBuyLot", "0.08", <DoubleParam key="d" />],
  ["IncreaseYourRisk", "2.0", <DoubleParam key="d" />],
  ["startingSellLot", "0.07", <DoubleParam key="d" />],
];

const DialogButton = ({ children, primary }: { children: ReactNode; primary?: boolean }) => (
  <button
    type="button"
    className={`h-[21px] flex-1 rounded-[2px] border bg-[#fdfdfd] text-[10px] leading-[18px] text-black ${
      primary ? "border-[#6aaee0]" : "border-[#e2e2e2]"
    }`}
  >
    {children}
  </button>
);

function ExpertDialog() {
  return (
    <div
      role="dialog"
      aria-label="Expert"
      className="absolute bottom-[30px] left-[300px] top-[57px] flex w-[556px] flex-col rounded-lg bg-[#f0f0f0] px-1.5 pb-[6px] text-[10px] text-black shadow-[0_14px_26px_rgba(0,0,0,0.42),0_0_2px_rgba(0,0,0,0.5)]"
    >
      <header className="-mx-1.5 flex h-[23px] shrink-0 items-center rounded-t-lg bg-[#f4f4f4] pl-[5px] pr-2 text-[#222]">
        <h1 className="flex-1 text-[9px]">Expert - [eaclubshare.com]ForexKingleHedger</h1>
        <button type="button" aria-label="帮助" className="w-5 text-[11px]">
          ?
        </button>
        <button type="button" aria-label="关闭" className="ml-4 flex w-5 justify-center">
          <svg viewBox="0 0 9 9" aria-hidden="true" className="size-[9px]">
            <path d="M.5.5l8 8M8.500.5l-8 8" stroke="#222" strokeWidth="1" fill="none" />
          </svg>
        </button>
      </header>
      <div role="tablist" className="mt-1.5 flex h-[17px] shrink-0 items-end leading-[15px]">
        <button type="button" role="tab" aria-selected="false" className="h-[15px] w-[38px] border-r border-[#e6e6e6] bg-[#f3f3f3] pr-2">
          关于
        </button>
        <button type="button" role="tab" aria-selected="false" className="h-[15px] w-[38px] bg-[#f3f3f3] pr-1.5">
          常用
        </button>
        <button type="button" role="tab" aria-selected="true" className="h-[17px] w-[49px] bg-[#f9f9f9]">
          输入参数
        </button>
      </div>
      <div className="flex min-h-0 flex-1 gap-[7px] bg-[#f9f9f9] pb-1 pl-[5px] pr-1 pt-1">
        <div className="min-w-0 flex-1 border border-[#c6c6c6] bg-white">
          <table className="w-full table-fixed border-collapse leading-[14px]">
            <thead>
              <tr className="h-4">
                <th className="border-r border-[#e6e6e6] p-0 pl-[3px] text-left font-normal">变量</th>
                <th className="p-0 pl-0.5 text-left font-normal">赋值</th>
              </tr>
            </thead>
            <tbody>
              {params.map(([name, value, icon]) => (
                <tr key={name} className="h-[15px] even:h-4 even:bg-[#e9e9e9]">
                  <td className="border-r border-[#e0e0e0] p-0 pl-px">
                    <span className="flex items-center gap-[3px]">
                      {icon}
                      {name}
                    </span>
                  </td>
                  <td className="p-0 pl-0.5">{value}</td>
                </tr>
              ))}
            </tbody>
          </table>
        </div>
        <div className="flex w-[97px] shrink-0 flex-col justify-end gap-[9px] pb-[3px]">
          <div className="flex"><DialogButton>加载(L)</DialogButton></div>
          <div className="flex"><DialogButton>保存(S)</DialogButton></div>
        </div>
      </div>
      <footer className="ml-auto flex w-[218px] shrink-0 gap-[5px]">
        <DialogButton primary>确定</DialogButton>
        <DialogButton>取消</DialogButton>
        <DialogButton>重设</DialogButton>
      </footer>
      <div className="pointer-events-none absolute bottom-1.5 left-[161px] flex items-end gap-1 text-[#0a54e0]">
        <svg viewBox="0 0 37 32" aria-hidden="true" className="mb-1 h-8 w-[37px]">
          <path d="M11 1h18.500a3 3 0 012.700 1.800l4.500 12.700a1.500 1.500 0 01-1.500 2H17a3 3 0 01-2.800-1.800L9.300 3A1.500 1.500 0 0111 1z" fill="currentColor" />
          <path d="M6.300 6.500l4.900 12.300a4.500 4.500 0 004.300 2.800h19.800c-.3 1.700-1.300 2.700-3 2.700H13.500a4.500 4.500 0 01-4.200-2.900L5 10c-.6-1.600-.1-2.900 1.300-3.500z" fill="currentColor" />
          <path d="M2.900 12l4 10.300a5 5 0 004.700 3.100h17c-.4 1.600-1.400 2.500-3 2.500H10A4.500 4.500 0 015.700 25L1.700 15.300c-.5-1.500-.1-2.700 1.200-3.300z" fill="currentColor" />
          <path d="M.9 18.500l3.300 7.700a5 5 0 004.600 3h14.500c-.5 1.600-1.500 2.400-3 2.400H8.500a4.500 4.500 0 01-4.200-2.800L.4 21.300C-.1 20.100 0 19.100.9 18.500z" fill="currentColor" />
        </svg>
        <div className="flex flex-col items-center font-bold">
          <span className="font-['Noto_Sans_CJK_SC',sans-serif] text-[27px] leading-6">精品EA</span>
          <span className="font-['Noto_Sans_CJK_SC',sans-serif] text-[14px] leading-4">eaclubshare.com</span>
        </div>
      </div>
    </div>
  );
}

export default function App() {
  return (
    <div className="relative h-screen overflow-hidden bg-[#e4e4e4] pl-[5px] pr-1 font-['Noto_Sans','Noto_Sans_CJK_SC',sans-serif]">
      <div className="flex h-full flex-col border-l border-r border-[#d0d0d0] bg-[#f0f0f0]">
        <MenuBar />
        <Toolbars />
        <main className="flex min-h-0 flex-1">
          <aside className="flex w-[283px] shrink-0 flex-col border-t border-[#ccc] pr-0.5">
            <MarketWatch />
            <Navigator />
          </aside>
          <Chart />
        </main>
        <Terminal />
      </div>
      <ExpertDialog />
    </div>
  );
}
